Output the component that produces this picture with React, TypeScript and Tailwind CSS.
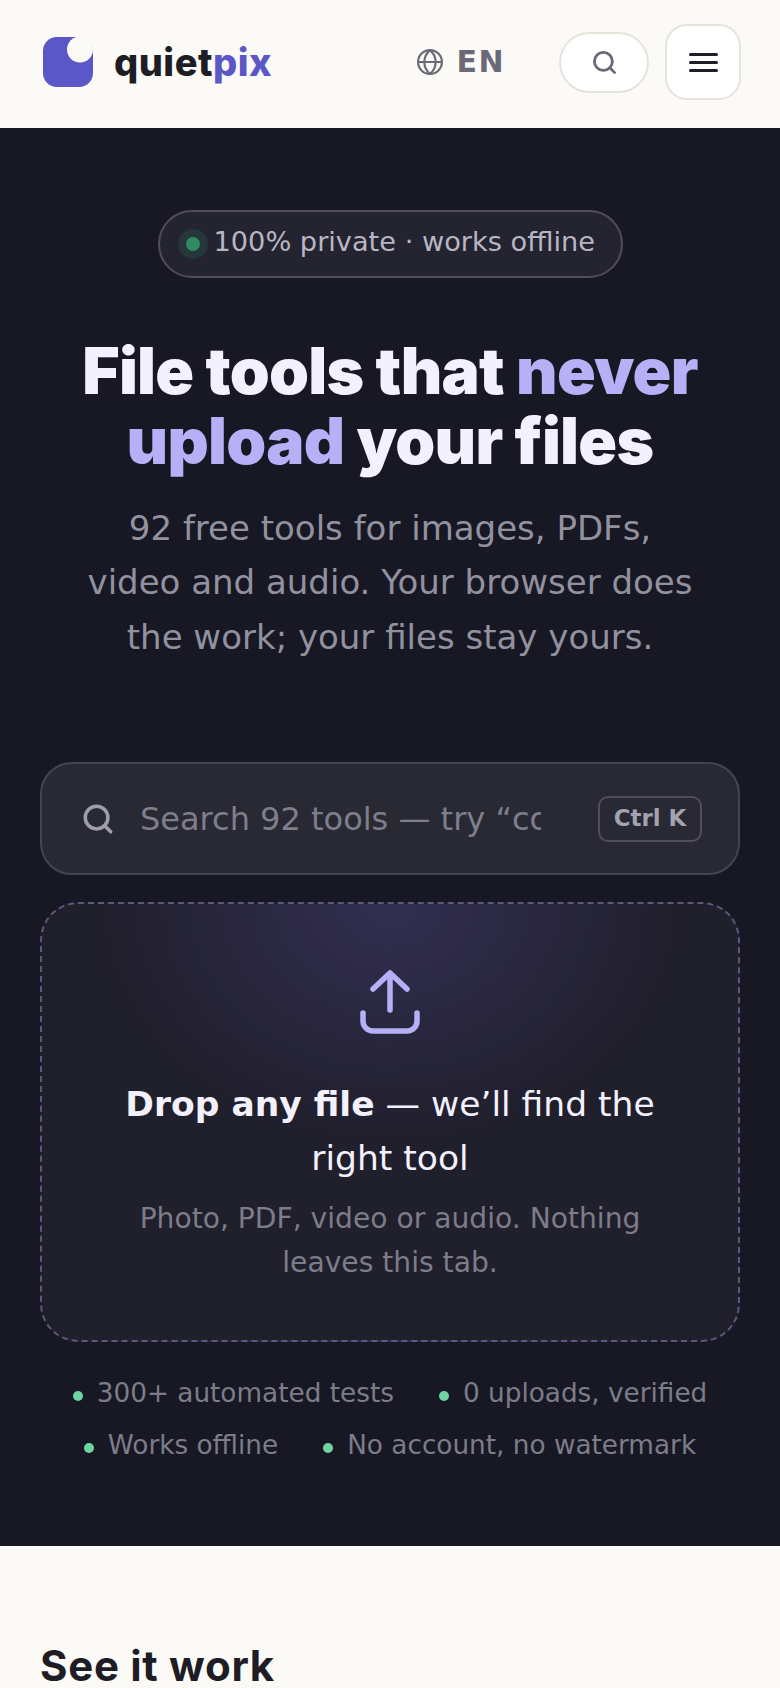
import React from 'react';

const bodyFont = "font-['DejaVu_Sans',sans-serif]";
const headFont = "font-['Inter',sans-serif]";

const trustRows = [
  ['300+ automated tests', '0 uploads, verified'],
  ['Works offline', 'No account, no watermark'],
];

const SearchIcon: React.FC<{ className: string }> = ({ className }) => (
  <svg viewBox="0 0 24 24" fill="none" stroke="currentColor" strokeWidth="2.500" strokeLinecap="round" className={className}>
    <circle cx="11" cy="11" r="8" />
    <path d="m21 21-4.300-4.300" />
  </svg>
);

const Header: React.FC = () => (
  <header className="h-[128px] bg-[#fbfaf6] flex items-center pl-[43px] pr-[39px] pb-[4px]">
    <svg viewBox="0 0 50 50" className="w-[50px] h-[50px] shrink-0">
      <path
        fill="#5b57c9"
        d="M14 0H36A14 14 0 0 1 50 14V36A14 14 0 0 1 36 50H14A14 14 0 0 1 0 36V14A14 14 0 0 1 14 0Z"
      />
      <circle cx="37" cy="12.500" r="13" fill="#fbfaf6" />
    </svg>
    <div className={`ml-[21px] ${headFont} text-[38px] font-extrabold tracking-[0.5px] text-[#1e1d25]`}>
      quiet<span className="text-[#5b57c9]">pix</span>
    </div>
    <div className="ml-auto flex items-center gap-[13px] text-[#6b6977]">
      <svg viewBox="0 0 24 24" fill="none" stroke="currentColor" strokeWidth="2" className="w-[26px] h-[26px]">
        <circle cx="12" cy="12" r="11" />
        <path d="M1 12h22M12 1c-7 6-7 16 0 22M12 1c7 6 7 16 0 22" />
      </svg>
      <span className={`${bodyFont} text-[30px] font-bold tracking-[1.500px] -mt-[2px]`}>EN</span>
    </div>
    <button className="ml-[54px] w-[90px] h-[61px] rounded-full bg-white border-2 border-[#e6e3dc] flex items-center justify-center text-[#6b6977]">
      <SearchIcon className="w-[27px] h-[27px]" />
    </button>
    <button className="ml-[16px] w-[76px] h-[76px] rounded-[22px] bg-white border-2 border-[#e6e3dc] flex flex-col items-center justify-center gap-[5px]">
      <span className="w-[29px] h-[3px] rounded-full bg-[#1e1d25]" />
      <span className="w-[29px] h-[3px] rounded-full bg-[#1e1d25]" />
      <span className="w-[29px] h-[3px] rounded-full bg-[#1e1d25]" />
    </button>
  </header>
);

const Hero: React.FC = () => (
  <section className={`h-[1418px] bg-[#171823] px-[40px] pt-[82px] ${bodyFont}`}>
    <div className="flex justify-center">
      <div className="h-[68px] w-[465px] rounded-full bg-[#242330] border-2 border-[#4f4e5a] flex items-center pl-[18px]">
        <span className="w-[30px] h-[30px] rounded-full bg-[#25373b] flex items-center justify-center">
          <span className="w-[14px] h-[14px] rounded-full bg-[#318a62]" />
        </span>
        <span className="ml-[6px] text-[27.2px] text-[#b8b6c4] -mt-[4px]">100% private · works offline</span>
      </div>
    </div>

    <h1 className={`mt-[58px] text-center ${headFont} text-[64px] leading-[70.4px] font-black tracking-[-0.7px] text-[#f3f1fd]`}>
      File tools that <span className="text-[#b6b0f6]">never upload</span> your files
    </h1>

    <p className="mt-[24px] text-center text-[34px] leading-[54.4px] text-[#92919f] px-[43px]">
      92 free tools for images, PDFs, video and audio. Your browser does the work; your files stay yours.
    </p>

    <div className="mt-[98px] h-[113px] rounded-[32px] bg-[#282933] border-2 border-[#44454f] flex items-center pl-[39px] pr-[36px]">
      <SearchIcon className="w-[34px] h-[34px] text-[#9e9dab] shrink-0" />
      <input
        readOnly
        placeholder="Search 92 tools — try “compress”"
        className="ml-[25px] w-[401px] bg-transparent outline-none text-[32px] placeholder:text-[#7f7e8c]"
      />
      <span className="ml-auto w-[104px] h-[46px] rounded-[10px] border-2 border-[#4f4e5a] flex items-center justify-center text-[22.8px] font-bold text-[#a3a2b0]">
        Ctrl K
      </span>
    </div>

    <div className="mt-[27px] h-[440px] rounded-[38px] border-2 border-dashed border-[#5d5880] bg-[#201f2c] bg-[radial-gradient(ellipse_42%_55%_at_50%_0%,#322f52,transparent)] flex flex-col items-center pt-[66px] px-[60px] text-center">
      <svg viewBox="0 0 60 64" fill="none" stroke="#b6b0f6" strokeWidth="5.500" strokeLinecap="round" strokeLinejoin="round" className="w-[60px] h-[64px] shrink-0">
        <path d="M30 40V3M13 19 30 3l17 16" />
        <path d="M3 43v8a10 10 0 0 0 10 10h34a10 10 0 0 0 10-10v-8" />
      </svg>
      <div className="mt-[43px] text-[34.5px] leading-[54px] text-[#f3f1fd]">
        <strong className="font-bold">Drop any file</strong> — we’ll find the right tool
      </div>
      <div className="mt-[12px] text-[28.16px] leading-[44px] text-[#7d7c89]">
        Photo, PDF, video or audio. Nothing leaves this tab.
      </div>
    </div>

    <div className="mt-[26px] flex flex-col">
      {trustRows.map((row) => (
        <div key={row[0]} className="h-[52px] flex items-center justify-center gap-[45px]">
          {row.map((label) => (
            <span key={label} className="flex items-center gap-[14px] text-[26.3px] text-[#7d7c89]">
              <span className="w-[10px] h-[10px] rounded-full bg-[#6ed4a0] mt-[3px]" />
              {label}
            </span>
          ))}
        </div>
      ))}
    </div>
  </section>
);

const App: React.FC = () => (
  <div className="h-[1688px] overflow-hidden bg-[#fbfaf6]">
    <Header />
    <Hero />
    <section className="px-[40px] pt-[88px]">
      <h2 className={`${headFont} text-[42px] font-bold tracking-[0.7px] text-[#1e1d25]`}>See it work</h2>
    </section>
  </div>
);

export default App;
